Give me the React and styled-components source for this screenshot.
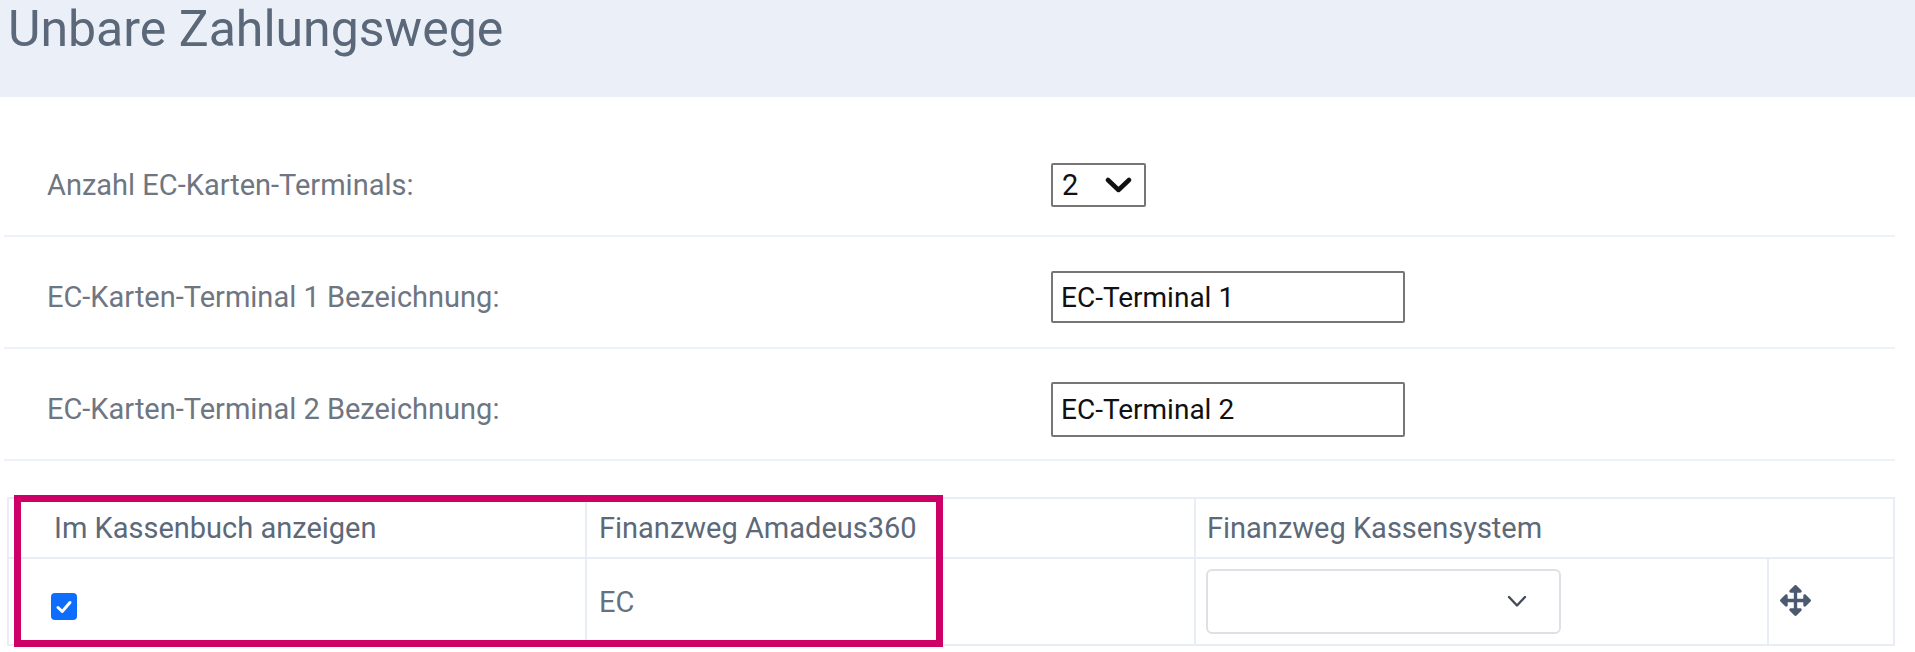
import React from "react";
import styled, { createGlobalStyle } from "styled-components";
import { FaArrowsAlt } from "react-icons/fa";

const GlobalStyle = createGlobalStyle`
  html, body { margin: 0; padding: 0; background: #ffffff; }
  body { font-family: Roboto, "Open Sans", "Liberation Sans", sans-serif; }
  * { box-sizing: border-box; }
`;

const Page = styled.div`
  width: 1915px;
  min-height: 652px;
  overflow: hidden;
`;

const TitleBar = styled.header`
  height: 97px;
  background: #ebf0f8;
  padding: 0 0 0 8px;
`;

const Title = styled.h1`
  margin: 0;
  font-family: Roboto, "Open Sans", sans-serif;
  font-weight: 400;
  font-size: 50px;
  line-height: 58px;
  color: #5b6879;
`;

const Form = styled.section`
  margin: 0 20px 0 4px;
  padding-top: 28px;
`;

const Row = styled.div`
  display: grid;
  grid-template-columns: 1004px 1fr;
  align-items: center;
  height: 112px;
  padding: 10px 0 0 43px;
  border-bottom: 2px solid #edf1f8;
`;

const Label = styled.label`
  font-size: 29px;
  line-height: 36px;
  color: #6e7682;
`;

const NativeLikeSelect = styled.div`
  display: flex;
  align-items: center;
  justify-content: space-between;
  width: 95px;
  height: 44px;
  padding: 0 12px 0 9px;
  border: 2px solid #767676;
  border-radius: 2px;
  background: #fff;
  font-size: 29px;
  color: #111;
`;

const TextInput = styled.input`
  width: 354px;
  height: ${(p) => p.$h || 53}px;
  padding: 0 8px;
  border: 2px solid #767676;
  border-radius: 2px;
  font-family: Roboto, "Open Sans", sans-serif;
  font-size: 28px;
  color: #111;
  background: #fff;
  outline: none;
`;

const TableWrap = styled.div`
  position: relative;
  margin: 36px 22px 0 7px;
`;

const Table = styled.table`
  width: 1886px;
  table-layout: fixed;
  border-collapse: collapse;
  border: 2px solid #e9eef6;
`;

const Th = styled.th`
  height: 60px;
  padding: 0 0 0 ${(p) => p.$pl || 11}px;
  text-align: left;
  vertical-align: middle;
  font-weight: 400;
  font-size: 29px;
  color: #5c6979;
  border: 2px solid #e9eef6;
`;

const Td = styled.td`
  height: 87px;
  padding: 0 0 0 ${(p) => p.$pl || 11}px;
  vertical-align: middle;
  font-size: 29px;
  color: #667180;
  border: 2px solid #e9eef6;
`;

const CheckBox = styled.span`
  display: inline-flex;
  align-items: center;
  justify-content: center;
  width: 26px;
  height: 27px;
  margin-top: 12px;
  border-radius: 4px;
  background: #0d6efd;
`;

const RoundSelect = styled.div`
  display: flex;
  align-items: center;
  justify-content: flex-end;
  width: 355px;
  height: 65px;
  padding-right: 32px;
  border: 2px solid #dde1e6;
  border-radius: 6px;
  background: #fff;
`;

const MoveHandle = styled.span`
  display: inline-flex;
  color: #4b5a6e;
  margin-top: 4px;
`;

const Highlight = styled.div`
  position: absolute;
  left: 7px;
  top: -2px;
  width: 929px;
  height: 152px;
  border: 7px solid #cc0066;
  pointer-events: none;
`;

function BoldChevron() {
  return (
    <svg width="27" height="18" viewBox="0 0 27 18" aria-hidden="true">
      <path d="M3 4 L13.5 14 L24 4" fill="none" stroke="#111" strokeWidth="4.5" strokeLinecap="round" strokeLinejoin="round" />
    </svg>
  );
}

function ThinChevron() {
  return (
    <svg width="20" height="13" viewBox="0 0 20 13" aria-hidden="true">
      <path d="M2 2 L10 10.5 L18 2" fill="none" stroke="#444b55" strokeWidth="2.4" strokeLinecap="round" strokeLinejoin="round" />
    </svg>
  );
}

function Check() {
  return (
    <svg width="18" height="16" viewBox="0 0 18 16" aria-hidden="true">
      <path d="M3 8.5 L7.2 12.5 L15 3.5" fill="none" stroke="#fff" strokeWidth="3" strokeLinecap="round" strokeLinejoin="round" />
    </svg>
  );
}

const terminals = ["EC-Terminal 1", "EC-Terminal 2"];

export default function App() {
  return (
    <Page>
      <GlobalStyle />
      <TitleBar>
        <Title>Unbare Zahlungswege</Title>
      </TitleBar>

      <Form>
        <Row>
          <Label>Anzahl EC-Karten-Terminals:</Label>
          <NativeLikeSelect>
            <span>2</span>
            <BoldChevron />
          </NativeLikeSelect>
        </Row>
        {terminals.map((t, i) => (
          <Row key={t}>
            <Label>{`EC-Karten-Terminal ${i + 1} Bezeichnung:`}</Label>
            <TextInput readOnly value={t} $h={i === 0 ? 52 : 55} />
          </Row>
        ))}
      </Form>

      <TableWrap>
        <Table>
          <colgroup>
            <col style={{ width: 578 }} />
            <col style={{ width: 609 }} />
            <col style={{ width: 573 }} />
            <col style={{ width: 126 }} />
          </colgroup>
          <thead>
            <tr>
              <Th $pl={45}>Im Kassenbuch anzeigen</Th>
              <Th $pl={12}>Finanzweg Amadeus360</Th>
              <Th $pl={11} colSpan={2}>Finanzweg Kassensystem</Th>
            </tr>
          </thead>
          <tbody>
            <tr>
              <Td $pl={42}>
                <CheckBox>
                  <Check />
                </CheckBox>
              </Td>
              <Td $pl={12}>EC</Td>
              <Td $pl={10}>
                <RoundSelect>
                  <ThinChevron />
                </RoundSelect>
              </Td>
              <Td $pl={11}>
                <MoveHandle>
                  <FaArrowsAlt size={31} />
                </MoveHandle>
              </Td>
            </tr>
          </tbody>
        </Table>
        <Highlight />
      </TableWrap>
    </Page>
  );
}
